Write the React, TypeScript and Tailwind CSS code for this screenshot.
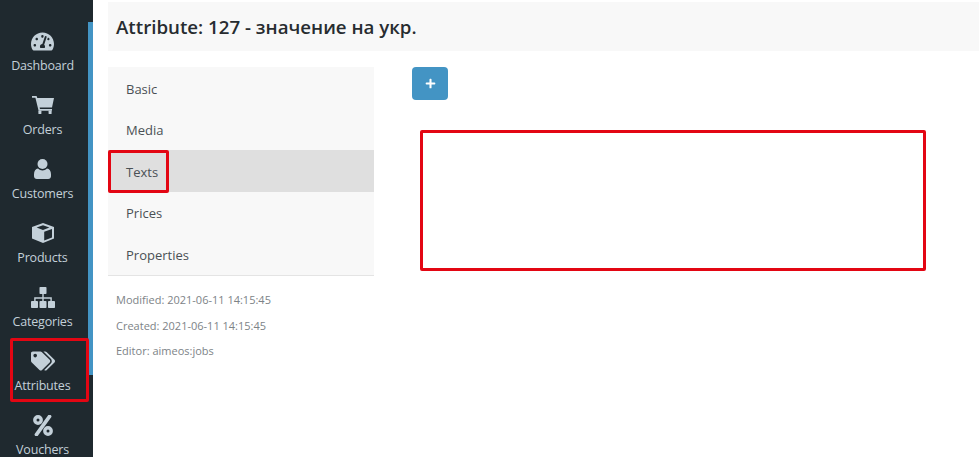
import type { ReactNode } from "react";
import { FaPlus, FaTachometerAlt, FaTags } from "react-icons/fa";

function CartIcon() {
  return (
    <svg viewBox="0 0 22 18" className="h-[18px] w-[22px]" fill="currentColor">
      <path d="M0 0h4.6l.7 2H22l-2 9.5H7.6l.4 1.6h12v1.6H6.6L3.4 1.7H0z" />
      <rect x="6.4" y="14.6" width="3" height="3.4" rx="0.6" />
      <rect x="16.6" y="14.6" width="3" height="3.4" rx="0.6" />
    </svg>
  );
}

function UserIcon() {
  return (
    <svg viewBox="0 0 17 20" className="h-[20px] w-[17px]" fill="currentColor">
      <circle cx="8.5" cy="5" r="5" />
      <path d="M4 9.6c1.2 1.2 2.8 1.9 4.5 1.9s3.3-.7 4.5-1.9c2.4.4 4 2.6 4 5.6v2c0 1.6-1.2 2.8-2.8 2.8H2.8C1.2 20 0 18.8 0 17.2v-2c0-3 1.6-5.2 4-5.6z" />
    </svg>
  );
}

function CubeIcon() {
  return (
    <svg viewBox="0 0 22 20" className="h-[20px] w-[22px]" fill="currentColor" fillRule="evenodd">
      <path d="M11 0l11 4v11.5L11 20 0 15.5V4zM11 2.2L4.6 4.5 11 6.9l6.4-2.4zM12.2 8.8v8.8l7.800-3.200V5.900z" />
    </svg>
  );
}

function SitemapIcon() {
  return (
    <svg viewBox="0 0 24 21" className="h-[21px] w-[24px]" fill="currentColor">
      <rect x="8.5" y="0" width="7" height="7" rx="0.8" />
      <rect x="0" y="14" width="7" height="7" rx="0.8" />
      <rect x="8.5" y="14" width="7" height="7" rx="0.8" />
      <rect x="17" y="14" width="7" height="7" rx="0.8" />
      <path d="M11.3 7h1.400v3.300h8.100V14h-1.400v-2.300h-6.700V14h-1.400v-2.300H4.600V14H3.200v-3.700h8.100z" />
    </svg>
  );
}

function PercentIcon() {
  return (
    <svg viewBox="0 0 20 21" className="h-[21px] w-[20px]" fill="none" stroke="currentColor">
      <circle cx="5" cy="5" r="3.2" strokeWidth="3.4" />
      <circle cx="15" cy="16" r="3.2" strokeWidth="3.4" />
      <path d="M16.5 1.5L3.5 19.5" strokeWidth="3.8" strokeLinecap="round" />
    </svg>
  );
}

const navItems: { label: string; icon: ReactNode }[] = [
  { label: "Dashboard", icon: <FaTachometerAlt className="h-[23px] w-[23px]" /> },
  { label: "Orders", icon: <CartIcon /> },
  { label: "Customers", icon: <UserIcon /> },
  { label: "Products", icon: <CubeIcon /> },
  { label: "Categories", icon: <SitemapIcon /> },
  { label: "Attributes", icon: <FaTags className="h-[24px] w-[24px]" /> },
  { label: "Vouchers", icon: <PercentIcon /> },
];

const tabs = ["Basic", "Media", "Texts", "Prices", "Properties"];

const meta = ["Modified: 2021-06-11 14:15:45", "Created: 2021-06-11 14:15:45", "Editor: aimeos:jobs"];

export default function App() {
  return (
    <div className="relative flex h-[457px] w-[979px] overflow-hidden bg-white font-['Open_Sans',sans-serif] text-[#30363b]">
      <aside className="relative h-full w-[93px] shrink-0 bg-[#1f292f] pt-[29px]">
        {navItems.map(({ label, icon }) => (
          <div key={label} className="flex h-[64px] w-[85px] flex-col items-center text-[#c3d0d9]">
            <div className="flex h-[24px] items-center justify-center">{icon}</div>
            <span className="mt-[3px] text-[12.5px] leading-[20px] tracking-[-0.2px]">{label}</span>
          </div>
        ))}
        <div className="absolute left-[88px] top-[22px] h-[353px] w-[5px] bg-[#4394c4]" />
      </aside>

      <main className="min-w-0 flex-1 pl-[15px] pt-[2px]">
        <h1 className="flex h-[49px] items-center bg-[#f8f8f8] pl-[8px] pt-[2px] text-[18.7px] font-semibold leading-none text-[#272c30]">
          Attribute: 127 - значение на укр.
        </h1>

        <div className="mt-[16px] flex">
          <div className="w-[266px] shrink-0">
            <ul className="border-b border-[#e4e4e4] bg-[#f8f8f8] text-[13px] text-[#4a5055]">
              {tabs.map((tab) => (
                <li
                  key={tab}
                  className={`flex h-[41.6px] items-center pl-[18px] pt-[3px] ${tab === "Texts" ? "bg-[#dfdfdf]" : ""}`}
                >
                  {tab}
                </li>
              ))}
            </ul>
            <div className="mt-[12px] pl-[8px] text-[11px] text-[#7d8387]">
              {meta.map((line) => (
                <p key={line} className="flex h-[25.4px] items-center">
                  {line}
                </p>
              ))}
            </div>
          </div>

          <div className="pl-[38px]">
            <button
              type="button"
              aria-label="Add"
              className="flex h-[33px] w-[36px] items-center justify-center rounded-[4px] bg-[#4394c4] pb-[1px] text-white"
            >
              <FaPlus className="h-[11px] w-[11px]" />
            </button>
          </div>
        </div>
      </main>

      {/* annotation boxes */}
      <div className="absolute left-[10px] top-[338px] h-[64px] w-[79px] rounded-[2px] border-[3px] border-[#e30613]" />
      <div className="absolute left-[108px] top-[150px] h-[43px] w-[61px] rounded-[2px] border-[3px] border-[#e30613]" />
      <div className="absolute left-[420px] top-[130px] h-[141px] w-[506px] rounded-[2px] border-[3px] border-[#e30613]" />
    </div>
  );
}
